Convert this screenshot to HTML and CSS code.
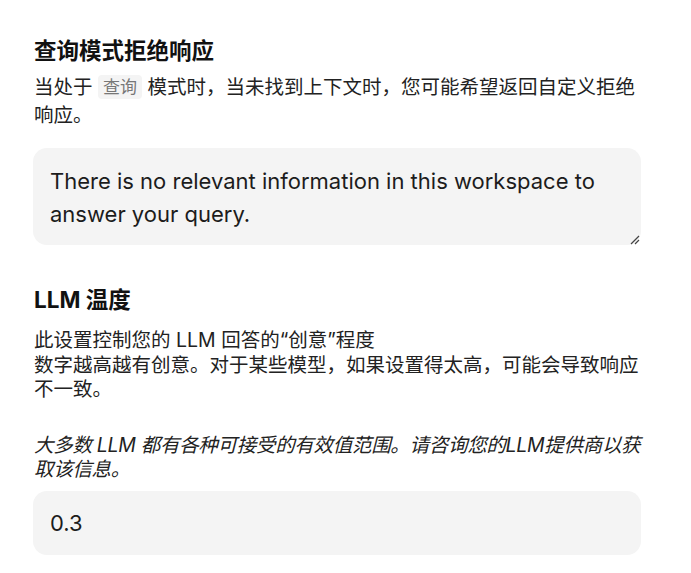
FILE: index.html
```html
<!DOCTYPE html>
<html lang="zh">
<head>
<meta charset="utf-8">
<link rel="stylesheet" href="styles.css">
</head>
<body>
<div class="page">
  <section class="field">
    <h2 class="title">查询模式拒绝响应</h2>
    <p class="desc">当处于 <code class="tag">查询</code> 模式时，当未找到上下文时，您可能希望返回自定义拒绝响应。</p>
    <div class="textarea">There is no relevant information in this workspace to answer your query.<span class="grip"><svg width="12" height="12" viewBox="0 0 12 12"><path d="M11 3 L3 11 M11 7 L7 11" stroke="#444" stroke-width="1.2" fill="none"/></svg></span></div>
  </section>
  <section class="field second">
    <h2 class="title">LLM 温度</h2>
    <p class="desc2">此设置控制您的 LLM 回答的“创意”程度<br>数字越高越有创意。对于某些模型，如果设置得太高，可能会导致响应不一致。</p>
    <p class="desc2 italic">大多数 LLM 都有各种可接受的有效值范围。请咨询您的LLM提供商以获取该信息。</p>
    <div class="input">0.3</div>
  </section>
</div>
</body>
</html>
```
FILE: styles.css
```css
* { box-sizing: border-box; }
body {
  margin: 0;
  background: #ffffff;
  font-family: Inter, "Noto Sans CJK SC", sans-serif;
  color: #1a1a1a;
}
.page {
  padding: 37px 50px 0 33px;
  width: 691px;
}
.field { display: flex; flex-direction: column; }
.title {
  margin: 0 0 0 1px;
  font-size: 22.5px;
  font-weight: 700;
  line-height: 28px;
  color: #111;
}
.desc {
  margin: 8px 0 0 1px;
  font-size: 19.5px;
  line-height: 28px;
  color: #222;
}
.tag {
  display: inline-block;
  font-family: inherit;
  font-size: 17px;
  line-height: 24px;
  background: #f4f4f4;
  color: #777;
  padding: 0 5px;
  border-radius: 4px;
  vertical-align: 1px;
}
.textarea {
  position: relative;
  margin-top: 19px;
  background: #f4f4f4;
  border-radius: 14px;
  height: 97px;
  padding: 17px 30px 0 17px;
  font-size: 22px;
  line-height: 33px;
  color: #1c1c1c;
}
.grip {
  position: absolute;
  right: 1px;
  bottom: 0px;
  line-height: 0;
}
.second { margin-top: 41px; }
.desc2 {
  margin: 14px 0 0 1px;
  font-size: 19.5px;
  line-height: 24.5px;
  color: #222;
}
.italic { font-style: italic; margin-top: 31px; letter-spacing: -0.3px; }
.input {
  margin-top: 9px;
  background: #f4f4f4;
  border-radius: 14px;
  height: 64px;
  padding: 0 17px;
  display: flex;
  align-items: center;
  font-size: 22px;
  color: #1c1c1c;
}
```
